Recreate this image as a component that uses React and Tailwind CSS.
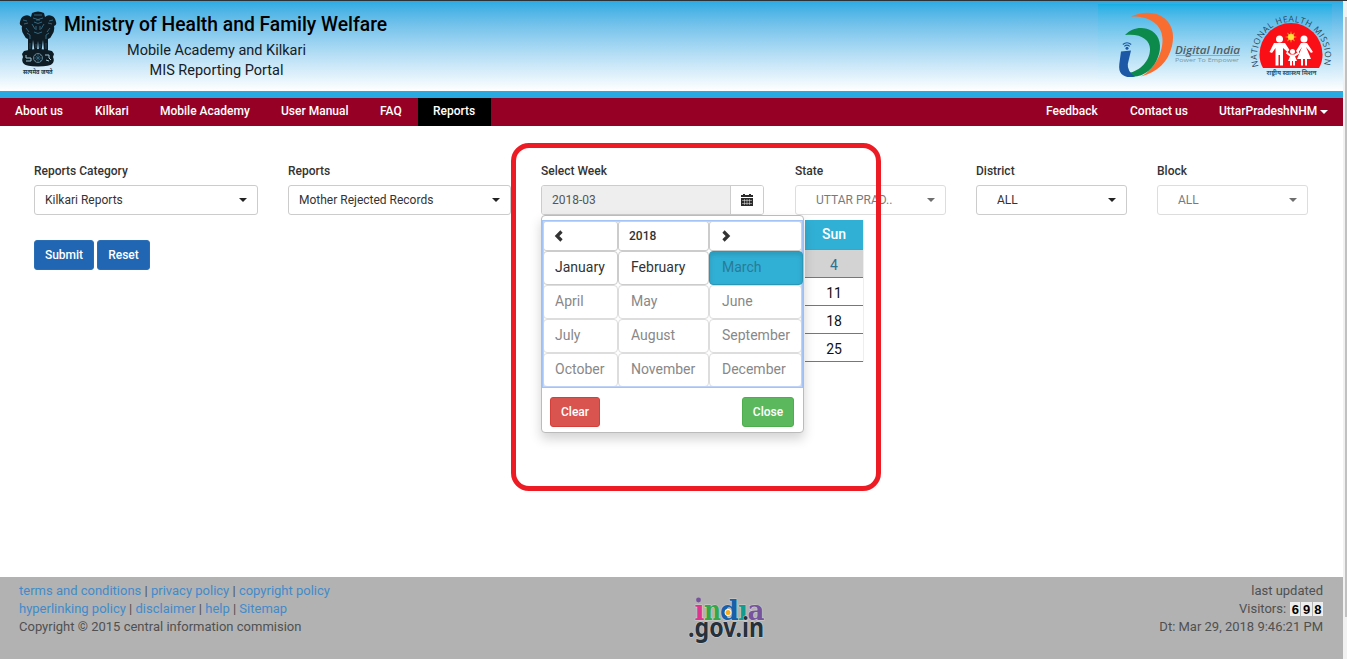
import React from "react";

function Emblem() {
  return (
    <svg width="38" height="66" viewBox="0 0 38 66" className="shrink-0">
      <g fill="#0d1c25">
        <path d="M13 2Q19-1 25 2L26 6Q29 3 33 5Q36 6 37 11Q38 14 35 15Q36 20 33 24Q32 27 29 28L29 40H25L24 29L22.500 40H20L19 30L18 40H15.500L14 29L13 40H9L9 28Q6 27 5 24Q2 20 3 15Q0 14 1 11Q2 6 5 5Q9 3 12 6Z" />
        <path d="M5 40Q19 36 33 40L35 43L34 46Q36 50 33 53Q31 55 19 55.500Q7 55 5 53Q2 50 4 46L3 43Z" />
      </g>
      <g fill="none" stroke="#4487a5" strokeWidth="0.700">
        <path d="M15 4h8M14 7q5 3 10 0M15 11q4 3 8 0M17 9h4M4 9l4 1M30 10l4-1M5 13l4-1M29 12l4 1M13 13l3 5M25 13l-3 5M7 17l3 4M31 17l-3 4M15 21q4 3 8 0M11 24v4M27 24v4M17 15v4M21 15v4M8 22l3 2M30 22l-3 2" />
        <path d="M11 32v6M27 32v6M17 33v4M21 33v4" stroke="#315e73" />
        <circle cx="19" cy="47" r="4.500" stroke="#82aab9" />
        <path d="M19 42.500v9M14.500 47h9M15.800 43.800l6.400 6.400M22.200 43.800l-6.400 6.400" strokeWidth="0.500" />
        <path d="M7 44v3h5v3H7M26 44h4v3l2 2M27 49l3 1" stroke="#a0c6d4" strokeWidth="1" />
      </g>
      <text x="4" y="62.500" textLength="29.500" lengthAdjust="spacingAndGlyphs" fontSize="6.500" fontWeight="700" fill="#26343c" fontFamily="Noto Sans Devanagari, Noto Sans, sans-serif">सत्यमेव जयते</text>
    </svg>
  );
}

function DigitalIndia() {
  return (
    <svg width="126" height="68" viewBox="0 0 126 68" className="shrink-0 overflow-visible">
      <path d="M12 3.500C22-1.500 34-1.500 42 3C53 9 56 21 53 33C49 49 39 59 22 63.500C33 58 44 42 43.500 26C43 10 29 3 12 3.500Z" fill="#fa6d30" />
      <path d="M6 22C13 14 25 13 33 18C41 23 43 34 39 44C35 56 24 65 11 63.500L9.500 60C21 58 31 48 31 36C31 27 22 20 6 22Z" fill="#0b8a4b" />
      <path d="M2 38.500L12 37.500L8.800 51Q8 58 16 63.500Q7 65.500 2.500 61Q-0.500 58 0.300 51Z" fill="#1c58a6" />
      <circle cx="8" cy="35.300" r="1.500" fill="#1c58a6" />
      <path d="M3.800 31.500q4.200-3.500 8.400 0M5.300 33.300q2.700-2.300 5.400 0" fill="none" stroke="#1c58a6" strokeWidth="1.100" />
      <text x="56" y="41" textLength="65" lengthAdjust="spacingAndGlyphs" fontFamily="Open Sans, sans-serif" fontStyle="italic" fontWeight="600" fontSize="11.500" fill="#505d65">Digital India</text>
      <path d="M57 42.500H121" stroke="#7d979f" strokeWidth="0.700" />
      <text x="56" y="49" textLength="64" lengthAdjust="spacingAndGlyphs" fontFamily="Open Sans, sans-serif" fontSize="6" fill="#7c98a3">Power To Empower</text>
    </svg>
  );
}

function HealthMission() {
  return (
    <svg width="82" height="66" viewBox="0 0 82 66" className="shrink-0 overflow-visible">
      <defs>
        <path id="missionArc" d="M8.500 52.500A34 34.500 0 1 1 73.500 52.500" />
      </defs>
      <path d="M13 54Q9.500 48 9.500 40.500A31.500 31.500 0 0 1 72.500 40.500Q72.500 48 69 54Z" fill="#fb0f17" />
      <text fontFamily="Open Sans, sans-serif" fontWeight="400" fontSize="8.500" fill="#2c4656">
        <textPath href="#missionArc" textLength="126" lengthAdjust="spacing">NATIONAL HEALTH MISSION</textPath>
      </text>
      <path d="M41 17l1 3.500 3-2-1.500 3.500 3.500 1-3.500 1 1.500 3.500-3-2-1 3.500-1-3.500-3 2 1.500-3.500-3.500-1 3.500-1-1.500-3.500 3 2z" fill="#ff9524" />
      <circle cx="41" cy="23" r="3" fill="#ffe13e" />
      <g fill="#fff">
        <circle cx="29.500" cy="25" r="3.500" />
        <path d="M24 29h11l4.500 7-2 2-4.500-4v17.500h-3V41h-1.500v10.500h-3V34l-3.500 5-2.500-1z" />
        <circle cx="54" cy="25" r="3.500" />
        <path d="M51 29h6l6 9-2 1-5-6 5 12h-4v6.500h-2V45h-2v6.500h-2V45h-4l5-12-4 6-2-2z" />
        <circle cx="42.500" cy="37.500" r="2.500" />
        <path d="M40.500 40.500h4l4-3 1 2-4.500 3 2 4.500h-2v4.500h-2V47h-1v4.500h-2V47h-2l2-4.500-4-3 1-2z" />
      </g>
      <text x="16.500" y="60.500" textLength="50" lengthAdjust="spacingAndGlyphs" fontSize="6" fontWeight="700" fill="#2f5664" fontFamily="Noto Sans Devanagari, Noto Sans, sans-serif">राष्ट्रीय स्वास्थ्य मिशन</text>
    </svg>
  );
}

function IndiaGov() {
  return (
    <svg width="80" height="50" viewBox="0 0 80 50" className="overflow-visible">
      <g fontFamily="DejaVu Serif, serif" fontWeight="700" stroke="#d2d1cf" strokeWidth="1.200" paintOrder="stroke" strokeLinejoin="round">
        <text x="5.500" y="24" fontSize="28" textLength="10" lengthAdjust="spacingAndGlyphs" fill="#df348e">ı</text>
        <text x="15" y="24" fontSize="28" textLength="17" lengthAdjust="spacingAndGlyphs" fill="#35a746">n</text>
        <text x="31" y="24" fontSize="28" textLength="19" lengthAdjust="spacingAndGlyphs" fill="#1860a9">d</text>
        <text x="49" y="24" fontSize="28" textLength="10" lengthAdjust="spacingAndGlyphs" fill="#119c91">ı</text>
        <text x="58.500" y="24" fontSize="28" textLength="17" lengthAdjust="spacingAndGlyphs" fill="#78539d">a</text>
        <text x="-1" y="41" textLength="76" lengthAdjust="spacingAndGlyphs" fontSize="26" fontFamily="Noto Sans, sans-serif" fill="#27313c">.gov.in</text>
      </g>
      <circle cx="9.500" cy="4" r="2.400" fill="#78539d" />
      <circle cx="39" cy="16.500" r="3.400" fill="#fff" />
      <circle cx="39" cy="16.500" r="2.500" fill="#f7ad19" />
    </svg>
  );
}

function Caret({ className = "" }) {
  return <span className={`h-0 w-0 shrink-0 border-x-4 border-t-4 border-x-transparent ${className}`} />;
}

function Field({ label, width, children }) {
  return (
    <div className={`flex shrink-0 flex-col ${width}`}>
      <label className="h-[24px] text-[12px] leading-[20px] font-medium">{label}</label>
      {children}
    </div>
  );
}

function Select({ value, indent = "pl-[10px]", disabled = false }) {
  return (
    <button className={`flex h-[30px] w-full items-center justify-between rounded-[3px] border border-[#ccc] bg-white pr-[10px] text-[12px] leading-[18px] whitespace-nowrap text-[#333] ${indent} ${disabled ? "opacity-65" : ""}`}>
      <span>{value}</span>
      <Caret className="border-t-[#222]" />
    </button>
  );
}

function CalendarIcon() {
  return (
    <svg width="12" height="12" viewBox="0 0 12 12">
      <path d="M0 1h2V0h2v1h4V0h2v1h2v2H0zM0 4h12v8H0z" fill="#2b2b2b" />
      <path d="M1 6.500h10M1 9.500h10M3.500 5v6M6 5v6M8.500 5v6" stroke="#fff" strokeWidth="0.450" />
    </svg>
  );
}

function Chevron({ right = false }) {
  return (
    <svg width="9" height="12" viewBox="0 0 9 12" className={right ? "rotate-180" : ""}>
      <path d="M7.500 1.500L3 6L7.500 10.500" fill="none" stroke="#333" strokeWidth="3.200" />
    </svg>
  );
}

const months = ["January", "February", "March", "April", "May", "June", "July", "August", "September", "October", "November", "December"];

function MonthPicker() {
  return (
    <div className="absolute top-[215px] left-[541px] flex h-[218px] w-[263px] flex-col rounded-[4px] border border-[#bbb] bg-white pt-[4px] shadow-[0_6px_12px_rgba(0,0,0,0.175)]">
      <div className="grid h-[168px] shrink-0 grid-cols-[75px_91px_93px] grid-rows-[30px_34px_34px_34px_34px] border border-[#a4c3f6] outline outline-[#bdd3f8] -outline-offset-2">
        <div className="flex items-center rounded-[3px] border border-[#ccc] pb-px pl-[10px]"><Chevron /></div>
        <div className="flex items-center rounded-[3px] border border-[#ccc] pl-[10px] text-[12px] font-medium">2018</div>
        <div className="flex items-center rounded-[3px] border border-[#ccc] pb-px pl-[12px]"><Chevron right /></div>
        {months.map((m, i) => (
          <div
            key={m}
            className={`flex items-center rounded-[4px] border pb-[2px] text-[14px] ${i % 3 === 0 ? "pl-[11px]" : "pl-[12px]"} ${i < 2 ? "border-[#ccc] text-[#333]" : i === 2 ? "relative -mr-px border-[#2a97b8] bg-[#31b0d5] text-[#287b98] shadow-[inset_0_3px_5px_rgba(0,0,0,0.125)]" : "border-[#ddd] text-[#888]"}`}
          >
            {m}
          </div>
        ))}
      </div>
      <div className="flex justify-between px-[8px] pt-[9px] pr-[9px] text-[12px] font-medium text-white">
        <button className="h-[30px] w-[50px] rounded-[3px] border border-[#d43f3a] bg-[#d9534f]">Clear</button>
        <button className="h-[30px] w-[52px] rounded-[3px] border border-[#4cae4c] bg-[#5cb85c]">Close</button>
      </div>
    </div>
  );
}

function WeekList() {
  return (
    <div className="absolute top-[220px] left-[805px] w-[59px] border-r border-[#eee] bg-white text-center text-[14px]">
      <div className="h-[30px] border-b border-[#78909a] bg-[#31b0d5] leading-[29px] font-medium text-white">Sun</div>
      {["4", "11", "18", "25"].map((d) => (
        <div key={d} className={`h-[28px] border-b border-[#777] leading-[30px] ${d === "4" ? "bg-[#d3d3d3] text-[#2b7190]" : "text-[#111]"}`}>{d}</div>
      ))}
    </div>
  );
}

const leftNav = [
  ["About us", "w-[80px]"],
  ["Kilkari", "w-[65px]"],
  ["Mobile Academy", "w-[121px]"],
  ["User Manual", "w-[99px]"],
  ["FAQ", "w-[53px]"],
  ["Reports", "w-[73px] bg-black"],
];

function FooterLinks({ items }) {
  return (
    <div>
      {items.map((t, i) => (
        <React.Fragment key={t}>
          {i > 0 && " | "}
          <a className="text-[#428bca]">{t}</a>
        </React.Fragment>
      ))}
    </div>
  );
}

export default function App() {
  return (
    <div className="relative flex h-[659px] w-[1347px] overflow-hidden bg-white font-[Roboto,sans-serif] text-[#333]">
      <div className="flex w-[1343px] shrink-0 flex-col">
        <header className="flex h-[98px] shrink-0 justify-between border-t border-b-[7px] border-t-[#2c3236] border-b-[#29abe2] bg-linear-to-b from-[#29abe2] to-white">
          <div className="flex pt-[10px] pl-[19px] text-black">
            <Emblem />
            <div className="ml-[7px] flex w-[323px] flex-col whitespace-nowrap">
              <h1 className="text-[19.300px] leading-[27px] font-medium">Ministry of Health and Family Welfare</h1>
              <div className="flex w-[305px] flex-col items-center text-[#142026]">
                <div className="mt-[2px] text-[14.500px] leading-[21px]">Mobile Academy and Kilkari</div>
                <div className="text-[14.500px] leading-[20px]">MIS Reporting Portal</div>
              </div>
            </div>
          </div>
          <div className="mt-[3px] mr-[11px] flex w-[234px] bg-linear-to-b from-[#15afe4] to-white pt-[9px] pl-[21px]">
            <DigitalIndia />
            <div className="ml-[5px] pt-[1px]"><HealthMission /></div>
          </div>
        </header>
        <nav className="flex h-[28px] shrink-0 bg-[#960024] text-[12px] leading-[26px] font-medium whitespace-nowrap text-white">
          {leftNav.map(([t, c]) => (
            <a key={t} className={`pl-[15px] ${c}`}>{t}</a>
          ))}
          <div className="ml-auto flex">
            <a className="w-[84px]">Feedback</a>
            <a className="w-[89px]">Contact us</a>
            <a className="flex h-[26px] w-[124px] items-center">
              <span className="w-[101px]">UttarPradeshNHM</span>
              <Caret className="mt-[2px] border-t-white" />
            </a>
          </div>
        </nav>
        <main className="flex-1 pt-[35px] pl-[34px]">
          <div className="flex">
            <Field label="Reports Category" width="w-[224px] mr-[30px]"><Select value="Kilkari Reports" /></Field>
            <Field label="Reports" width="w-[223px] mr-[30px]"><Select value="Mother Rejected Records" /></Field>
            <Field label="Select Week" width="w-[223px] mr-[31px]">
              <div className="flex h-[30px] overflow-hidden rounded-[3px] border border-[#ccc] text-[12px] text-[#555]">
                <div className="flex flex-1 items-center bg-[#eee] pl-[10px]">2018-03</div>
                <div className="flex w-[33px] items-center justify-center border-l border-[#ccc] bg-white"><CalendarIcon /></div>
              </div>
            </Field>
            <Field label="State" width="w-[151px] mr-[30px]"><Select value="UTTAR PRAD.." indent="pl-[20px]" disabled /></Field>
            <Field label="District" width="w-[151px] mr-[30px]"><Select value="ALL" indent="pl-[20px]" /></Field>
            <Field label="Block" width="w-[151px]"><Select value="ALL" indent="pl-[20px]" disabled /></Field>
          </div>
          <div className="mt-[25px] flex gap-[3px] text-[12px] font-medium text-white">
            <button className="h-[30px] w-[60px] rounded-[3px] border border-[#2a6fb5] bg-[#2066b2]">Submit</button>
            <button className="h-[30px] w-[53px] rounded-[3px] border border-[#2a6fb5] bg-[#2066b2]">Reset</button>
          </div>
        </main>
        <footer className="flex h-[82px] shrink-0 bg-[#b2b2b2] pt-[5px] pr-[20px] pl-[19px] text-[13px] leading-[18px] text-[#505050]">
          <div className="w-[670px] whitespace-nowrap">
            <FooterLinks items={["terms and conditions", "privacy policy", "copyright policy"]} />
            <FooterLinks items={["hyperlinking policy", "disclaimer", "help", "Sitemap"]} />
            <div>Copyright © 2015 central information commision</div>
          </div>
          <div className="pt-[14px]"><IndiaGov /></div>
          <div className="flex-1 text-right">
            <div>last updated</div>
            <div className="flex items-center justify-end gap-[4px]">
              <span>Visitors:</span>
              <span className="flex gap-px">
                {["6", "9", "8"].map((d) => (
                  <b key={d} className="h-[14px] w-[10.300px] bg-[#eee] text-center font-['Liberation_Sans'] text-[13px] leading-[15px] text-black">{d}</b>
                ))}
              </span>
            </div>
            <div>Dt: Mar 29, 2018 9:46:21 PM</div>
          </div>
        </footer>
      </div>
      <div className="w-[4px] border-t border-[#2c3236] bg-[#f1f1f1] pt-[16px] pl-[2px]">
        <div className="h-[600px] bg-[#c1c1c1]" />
      </div>
      <WeekList />
      <MonthPicker />
      <div className="pointer-events-none absolute top-[143px] left-[511px] h-[348px] w-[370px] rounded-[18px] border-[5px] border-[#ed1c24]" />
    </div>
  );
}
